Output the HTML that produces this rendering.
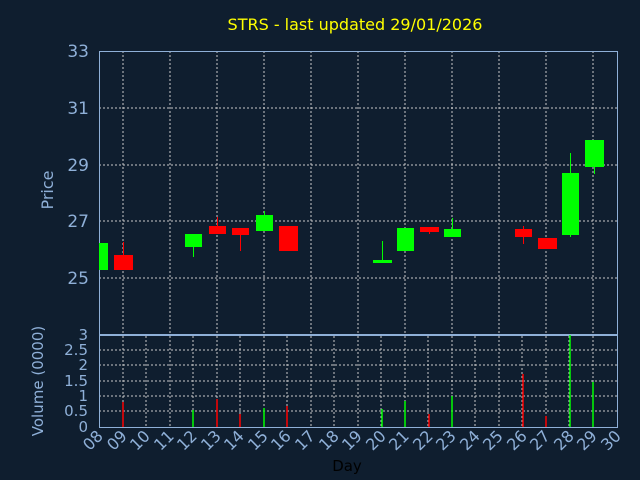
<!DOCTYPE html>
<html><head><meta charset="utf-8"><style>
html,body{margin:0;padding:0;background:#0f1e2f;width:640px;height:480px;overflow:hidden}
svg text{font-family:"DejaVu Sans","Liberation Sans",sans-serif}
</style></head><body>
<svg width="640" height="480" viewBox="0 0 640 480" xmlns="http://www.w3.org/2000/svg">
<rect width="640" height="480" fill="#0f1e2f"/>
<text x="355" y="30" fill="#ffff00" font-size="16" text-anchor="middle">STRS - last updated 29/01/2026</text>
<g stroke="#c8c8c8" stroke-width="1" stroke-dasharray="2,2">
<line x1="99" y1="108" x2="617" y2="108"/><line x1="99" y1="165" x2="617" y2="165"/>
<line x1="99" y1="221" x2="617" y2="221"/><line x1="99" y1="278" x2="617" y2="278"/>
<line x1="123" y1="51" x2="123" y2="333"/><line x1="170" y1="51" x2="170" y2="333"/>
<line x1="217" y1="51" x2="217" y2="333"/><line x1="264" y1="51" x2="264" y2="333"/>
<line x1="311" y1="51" x2="311" y2="333"/><line x1="358" y1="51" x2="358" y2="333"/>
<line x1="405" y1="51" x2="405" y2="333"/><line x1="452" y1="51" x2="452" y2="333"/>
<line x1="499" y1="51" x2="499" y2="333"/><line x1="546" y1="51" x2="546" y2="333"/>
<line x1="593" y1="51" x2="593" y2="333"/>
<line x1="99" y1="350" x2="617" y2="350"/><line x1="99" y1="365" x2="617" y2="365"/>
<line x1="99" y1="381" x2="617" y2="381"/><line x1="99" y1="396" x2="617" y2="396"/>
<line x1="99" y1="411" x2="617" y2="411"/>
<line x1="146" y1="336" x2="146" y2="427"/><line x1="170" y1="336" x2="170" y2="427"/>
<line x1="123" y1="336" x2="123" y2="427"/><line x1="193" y1="336" x2="193" y2="427"/>
<line x1="217" y1="336" x2="217" y2="427"/><line x1="240" y1="336" x2="240" y2="427"/>
<line x1="264" y1="336" x2="264" y2="427"/><line x1="287" y1="336" x2="287" y2="427"/>
<line x1="311" y1="336" x2="311" y2="427"/><line x1="334" y1="336" x2="334" y2="427"/>
<line x1="358" y1="336" x2="358" y2="427"/><line x1="381" y1="336" x2="381" y2="427"/>
<line x1="405" y1="336" x2="405" y2="427"/><line x1="428" y1="336" x2="428" y2="427"/>
<line x1="452" y1="336" x2="452" y2="427"/><line x1="475" y1="336" x2="475" y2="427"/>
<line x1="499" y1="336" x2="499" y2="427"/><line x1="522" y1="336" x2="522" y2="427"/>
<line x1="546" y1="336" x2="546" y2="427"/><line x1="569" y1="336" x2="569" y2="427"/>
<line x1="593" y1="336" x2="593" y2="427"/>
</g>
<g fill="none" stroke="#8fb0d8" stroke-width="1">
<rect x="99.5" y="51.5" width="518" height="283"/>
<rect x="99.5" y="335.5" width="518" height="92"/>
</g>
<g fill="#00ff00" stroke="#00ff00" stroke-width="1">
<rect x="99" y="243" width="9" height="27" stroke="none"/>
<rect x="185" y="234" width="17" height="13" stroke="none"/><line x1="193.5" y1="247" x2="193.5" y2="257"/>
<rect x="256" y="215" width="17" height="16" stroke="none"/><line x1="264.5" y1="211" x2="264.5" y2="215"/>
<rect x="373" y="260" width="19" height="3" stroke="none"/><line x1="382.5" y1="241" x2="382.5" y2="260"/>
<rect x="397" y="228" width="17" height="23" stroke="none"/>
<rect x="444" y="229" width="17" height="8" stroke="none"/><line x1="452.5" y1="218" x2="452.5" y2="229"/>
<rect x="562" y="173" width="17" height="62" stroke="none"/><line x1="570.5" y1="153" x2="570.5" y2="237"/>
<rect x="585" y="140" width="19" height="27" stroke="none"/><line x1="594.5" y1="167" x2="594.5" y2="174"/>
</g>
<g fill="#ff0000" stroke="#ff0000" stroke-width="1">
<rect x="114" y="255" width="19" height="15" stroke="none"/><line x1="123.5" y1="242" x2="123.5" y2="255"/>
<rect x="209" y="226" width="17" height="8" stroke="none"/><line x1="217.5" y1="217" x2="217.5" y2="226"/>
<rect x="232" y="228" width="17" height="7" stroke="none"/><line x1="240.5" y1="235" x2="240.5" y2="251"/>
<rect x="279" y="226" width="19" height="25" stroke="none"/>
<rect x="420" y="227" width="19" height="5" stroke="none"/><line x1="429.5" y1="232" x2="429.5" y2="234"/>
<rect x="515" y="229" width="17" height="8" stroke="none"/><line x1="523.5" y1="226" x2="523.5" y2="244"/>
<rect x="538" y="238" width="19" height="11" stroke="none"/>
</g>
<g stroke-width="1.5">
<line x1="123" y1="402" x2="123" y2="427" stroke="#ff0000"/>
<line x1="193" y1="410" x2="193" y2="427" stroke="#00ff00"/>
<line x1="217" y1="399" x2="217" y2="427" stroke="#ff0000"/>
<line x1="240" y1="414" x2="240" y2="427" stroke="#ff0000"/>
<line x1="264" y1="408" x2="264" y2="427" stroke="#00ff00"/>
<line x1="287" y1="406" x2="287" y2="427" stroke="#ff0000"/>
<line x1="382" y1="409" x2="382" y2="427" stroke="#00ff00"/>
<line x1="405" y1="401" x2="405" y2="427" stroke="#00ff00"/>
<line x1="429" y1="414" x2="429" y2="427" stroke="#ff0000"/>
<line x1="452" y1="396" x2="452" y2="427" stroke="#00ff00"/>
<line x1="523" y1="374" x2="523" y2="427" stroke="#ff0000"/>
<line x1="546" y1="416" x2="546" y2="427" stroke="#ff0000"/>
<line x1="570" y1="335" x2="570" y2="427" stroke="#00ff00"/>
<line x1="593" y1="382" x2="593" y2="427" stroke="#00ff00"/>
</g>
<g fill="#8fb0d8" font-size="17" text-anchor="end">
<text x="89" y="57">33</text><text x="89" y="114">31</text><text x="89" y="171">29</text>
<text x="89" y="227">27</text><text x="89" y="284">25</text>
</g>
<g fill="#8fb0d8" font-size="15" text-anchor="end">
<text x="88" y="340">3</text><text x="88" y="355">2.5</text><text x="88" y="370">2</text>
<text x="88" y="386">1.5</text><text x="88" y="401">1</text><text x="88" y="416">0.5</text><text x="88" y="432">0</text>
</g>
<text transform="translate(53,190) rotate(-90)" fill="#8fb0d8" font-size="16" text-anchor="middle">Price</text>
<text transform="translate(43,381) rotate(-90)" fill="#8fb0d8" font-size="15" text-anchor="middle">Volume (0000)</text>
<text x="347" y="471" fill="#000" font-size="15" text-anchor="middle">Day</text>
<g fill="#8fb0d8" font-size="16" text-anchor="end">
<text transform="translate(104,437) rotate(-45)">08</text>
<text transform="translate(128,437) rotate(-45)">09</text>
<text transform="translate(151,437) rotate(-45)">10</text>
<text transform="translate(175,437) rotate(-45)">11</text>
<text transform="translate(198,437) rotate(-45)">12</text>
<text transform="translate(222,437) rotate(-45)">13</text>
<text transform="translate(245,437) rotate(-45)">14</text>
<text transform="translate(269,437) rotate(-45)">15</text>
<text transform="translate(292,437) rotate(-45)">16</text>
<text transform="translate(316,437) rotate(-45)">17</text>
<text transform="translate(340,437) rotate(-45)">18</text>
<text transform="translate(363,437) rotate(-45)">19</text>
<text transform="translate(387,437) rotate(-45)">20</text>
<text transform="translate(410,437) rotate(-45)">21</text>
<text transform="translate(434,437) rotate(-45)">22</text>
<text transform="translate(457,437) rotate(-45)">23</text>
<text transform="translate(481,437) rotate(-45)">24</text>
<text transform="translate(504,437) rotate(-45)">25</text>
<text transform="translate(528,437) rotate(-45)">26</text>
<text transform="translate(551,437) rotate(-45)">27</text>
<text transform="translate(575,437) rotate(-45)">28</text>
<text transform="translate(598,437) rotate(-45)">29</text>
<text transform="translate(622,437) rotate(-45)">30</text>
</g>
</svg>
</body></html>
